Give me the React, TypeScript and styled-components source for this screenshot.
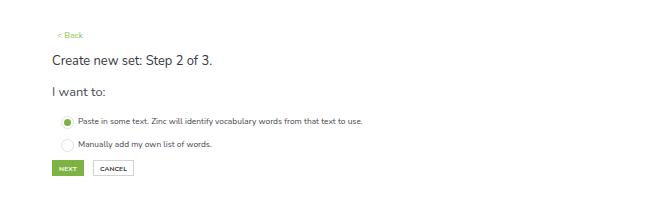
import React, { useState } from 'react';
import styled, { createGlobalStyle } from 'styled-components';

const GlobalStyle = createGlobalStyle`
  html, body {
    margin: 0;
    padding: 0;
    background: #ffffff;
  }
  body {
    font-family: Nunito, Lato, "Open Sans", sans-serif;
  }
`;

const Page = styled.div`
  width: 670px;
  height: 206px;
  box-sizing: border-box;
  padding: 28px 0 0 52px;
  display: flex;
  flex-direction: column;
  align-items: flex-start;
`;

const BackLink = styled.a`
  margin-left: 5px;
  font-size: 8.6px;
  line-height: 14px;
  color: #8bc34a;
  text-decoration: none;
  cursor: pointer;
`;

const Title = styled.h1`
  margin: 11px 0 0;
  font-size: 12.9px;
  line-height: 16px;
  font-weight: 400;
  color: #343941;
`;

const Subtitle = styled.h2`
  margin: 15px 0 0;
  font-size: 12.8px;
  line-height: 16px;
  font-weight: 400;
  color: #464a51;
`;

const Options = styled.div`
  margin: 15px 0 0 9px;
  display: flex;
  flex-direction: column;
  gap: 9px;
`;

const Option = styled.label`
  display: flex;
  align-items: center;
  gap: 4px;
  font-size: 8.4px;
  line-height: 14px;
  color: #3f444c;
  cursor: pointer;
`;

const Radio = styled.span<{ $checked: boolean }>`
  width: 13px;
  height: 13px;
  box-sizing: border-box;
  border-radius: 50%;
  border: 1px solid #e2e2e2;
  background: #fff;
  display: flex;
  align-items: center;
  justify-content: center;

  &::after {
    content: '';
    width: 7px;
    height: 7px;
    border-radius: 50%;
    background: ${({ $checked }) => ($checked ? '#7cb342' : 'transparent')};
  }
`;

const Actions = styled.div`
  margin-top: 8px;
  display: flex;
  gap: 9px;
`;

const Button = styled.button<{ $primary?: boolean }>`
  height: 16px;
  width: ${({ $primary }) => ($primary ? '32px' : '41px')};
  box-sizing: border-box;
  padding: 0;
  font-family: inherit;
  font-size: 6.6px;
  font-weight: 700;
  letter-spacing: 0.1px;
  border-radius: 0;
  cursor: pointer;
  color: ${({ $primary }) => ($primary ? '#ffffff' : '#333')};
  background: ${({ $primary }) => ($primary ? '#7cb342' : '#fff')};
  border: 1px solid ${({ $primary }) => ($primary ? '#7cb342' : '#d4d4d4')};
`;

export default function App() {
  const [choice, setChoice] = useState(0);
  const options = [
    'Paste in some text. Zinc will identify vocabulary words from that text to use.',
    'Manually add my own list of words.',
  ];

  return (
    <>
      <GlobalStyle />
      <Page>
        <BackLink>&lt; Back</BackLink>
        <Title>Create new set: Step 2 of 3.</Title>
        <Subtitle>I want to:</Subtitle>
        <Options>
          {options.map((text, i) => (
            <Option key={i} onClick={() => setChoice(i)}>
              <Radio $checked={choice === i} />
              {text}
            </Option>
          ))}
        </Options>
        <Actions>
          <Button $primary>NEXT</Button>
          <Button>CANCEL</Button>
        </Actions>
      </Page>
    </>
  );
}
